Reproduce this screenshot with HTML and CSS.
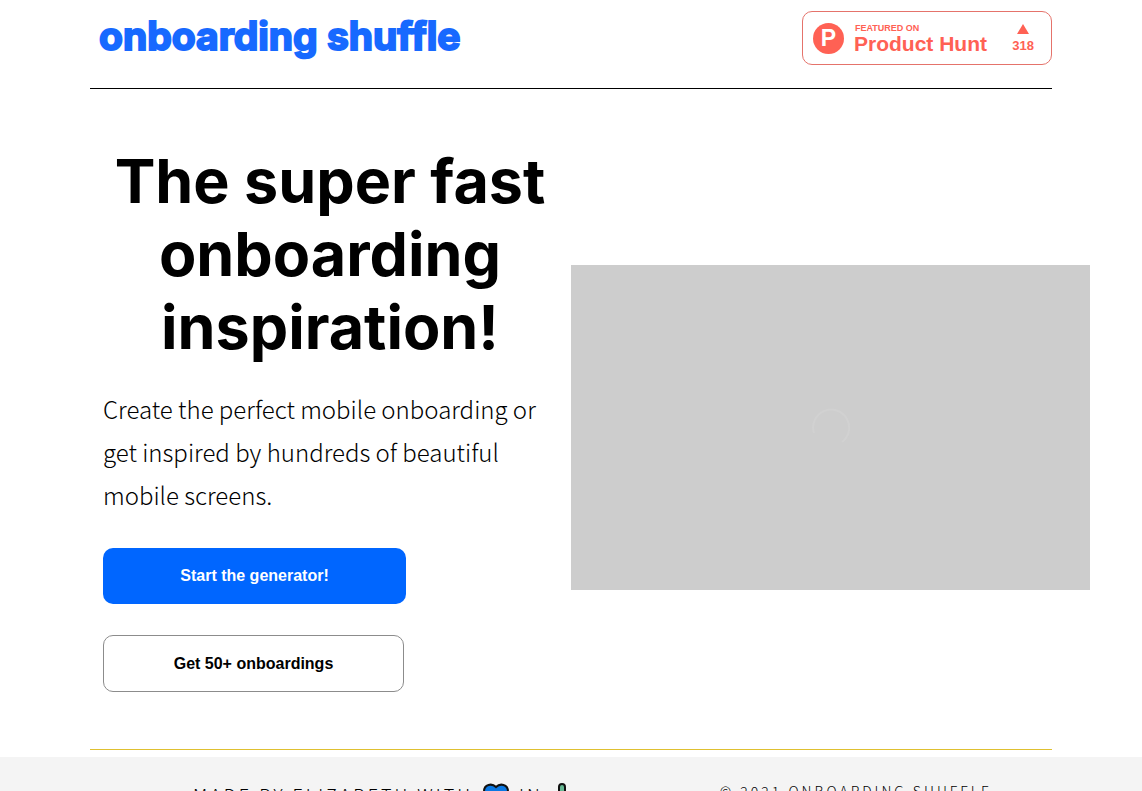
FILE: index.html
```html
<!DOCTYPE html>
<html lang="en">
<head>
<meta charset="utf-8">
<meta name="viewport" content="width=device-width, initial-scale=1">
<title>Onboarding Shuffle</title>
<link rel="stylesheet" href="styles.css">
</head>
<body>
<div class="container">
  <header class="header">
    <a class="logo" href="#">onboarding shuffle</a>
    <a class="badge" href="#">
      <span class="badge-mark">P</span>
      <span class="badge-copy">
        <span class="badge-label">FEATURED ON</span>
        <span class="badge-name">Product Hunt</span>
      </span>
      <span class="badge-votes">
        <svg width="12" height="10" viewBox="0 0 12 10" aria-hidden="true"><path d="M6 0 12 10H0Z" fill="currentColor"/></svg>
        <span>318</span>
      </span>
    </a>
  </header>
  <main class="hero">
    <section class="intro">
      <h1 class="title">The super fast onboarding inspiration!</h1>
      <p class="lead">Create the perfect mobile onboarding or get inspired by hundreds of beautiful mobile screens.</p>
      <button class="button button-primary" type="button">Start the generator!</button>
      <button class="button button-outline" type="button">Get 50+ onboardings</button>
    </section>
    <div class="media">
      <svg width="40" height="40" viewBox="0 0 40 40" fill="none" aria-hidden="true"><path d="M3 25A18 18 0 1 1 31 34" stroke="#d1d1d1" stroke-width="2"/></svg>
    </div>
  </main>
</div>
<footer class="footer">
  <div class="footer-inner">
    <p class="credit">
      <span>Made by Elizabeth with</span>
      <svg width="26" height="24" viewBox="0 0 26 24" aria-hidden="true"><path d="M13 23C7 19 1 14 1 8.500C1 1 9 0 13 4C17 0 25 1 25 8.500C25 14 19 19 13 23Z" fill="#0b78e3" stroke="#111" stroke-width="2"/></svg>
      <span>in</span>
      <svg width="18" height="28" viewBox="0 0 18 28" aria-hidden="true"><path d="M6 27V20H1V11H4V16H6V4Q6 1 9 1T12 4V14H14V9H17V18H12V27Z" fill="#65b792" stroke="#111" stroke-width="2" stroke-linejoin="round"/></svg>
    </p>
    <p class="copyright">© 2021 Onboarding Shuffle</p>
  </div>
</footer>
</body>
</html>
```
FILE: styles.css
```css
* {
  box-sizing: border-box;
}

body {
  margin: 0;
  background: #fff;
  color: #000;
  font-family: "Noto Sans CJK SC", "Noto Sans", sans-serif;
}

.container {
  max-width: 962px;
  margin: 0 auto;
}

.header {
  display: flex;
  justify-content: space-between;
  align-items: flex-start;
  padding: 11px 0 23px;
  border-bottom: 1px solid #000;
}

.logo {
  padding-left: 9px;
  color: #1769ff;
  font: 700 39px/50px Inter, sans-serif;
  text-decoration: none;
  -webkit-text-stroke: 2px #1769ff;
}

.badge {
  display: flex;
  align-items: center;
  width: 250px;
  height: 54px;
  padding: 0 17px 0 10px;
  border: 1px solid #e5736b;
  border-radius: 10px;
  color: #ff6154;
  font-family: "Liberation Sans", Arial, sans-serif;
  font-weight: 700;
  text-decoration: none;
}

.badge-mark {
  width: 31px;
  margin-right: 10px;
  border-radius: 50%;
  background: #ff6154;
  color: #fff;
  font-size: 23px;
  line-height: 31px;
  text-align: center;
}

.badge-copy {
  display: flex;
  flex-direction: column;
  padding-top: 2px;
}

.badge-label {
  padding-left: 1px;
  font-size: 9px;
  line-height: 10px;
}

.badge-name {
  font-size: 21px;
  line-height: 22px;
}

.badge-votes {
  display: flex;
  flex-direction: column;
  align-items: center;
  gap: 4px;
  margin-left: auto;
  font-size: 13px;
  line-height: 15px;
}

.hero {
  display: grid;
  grid-template-columns: 1fr 1fr;
  align-items: center;
  padding: 56px 0 39px;
  border-bottom: 1px solid #dfc030;
}

.intro {
  display: flex;
  flex-direction: column;
  align-items: flex-start;
  padding: 0 14px 18px 13px;
}

.title {
  align-self: stretch;
  margin: 0 0 23px;
  font: 700 61px/73px Inter, sans-serif;
  text-align: center;
}

.lead {
  margin: 0 0 32px;
  font-size: 24px;
  line-height: 43px;
  font-weight: 300;
}

.button {
  height: 56px;
  border: 0;
  border-radius: 10px;
  font: 700 16px "Liberation Sans", Arial, sans-serif;
}

.button-primary {
  width: 303px;
  margin-bottom: 31px;
  background: #06f;
  color: #fff;
}

.button-outline {
  width: 301px;
  height: 57px;
  border: 1px solid #8c8c8c;
  background: #fff;
  color: #000;
}

.media {
  display: grid;
  place-items: center;
  width: 108%;
  aspect-ratio: 16 / 10;
  background: #cdcdcd;
}

.footer {
  margin-top: 7px;
  background: #f4f4f4;
}

.footer-inner {
  display: flex;
  flex-wrap: wrap;
  justify-content: space-between;
  align-items: flex-start;
  max-width: 962px;
  margin: 0 auto;
  padding: 26px 60px 26px 103px;
  font-weight: 300;
  text-transform: uppercase;
}

.footer p {
  margin: 0;
}

.credit {
  display: flex;
  align-items: flex-start;
  gap: 10px;
  font-size: 18px;
  line-height: 22px;
  letter-spacing: 3px;
}

.copyright {
  font-size: 14px;
  line-height: 16px;
  letter-spacing: 3px;
}
```
